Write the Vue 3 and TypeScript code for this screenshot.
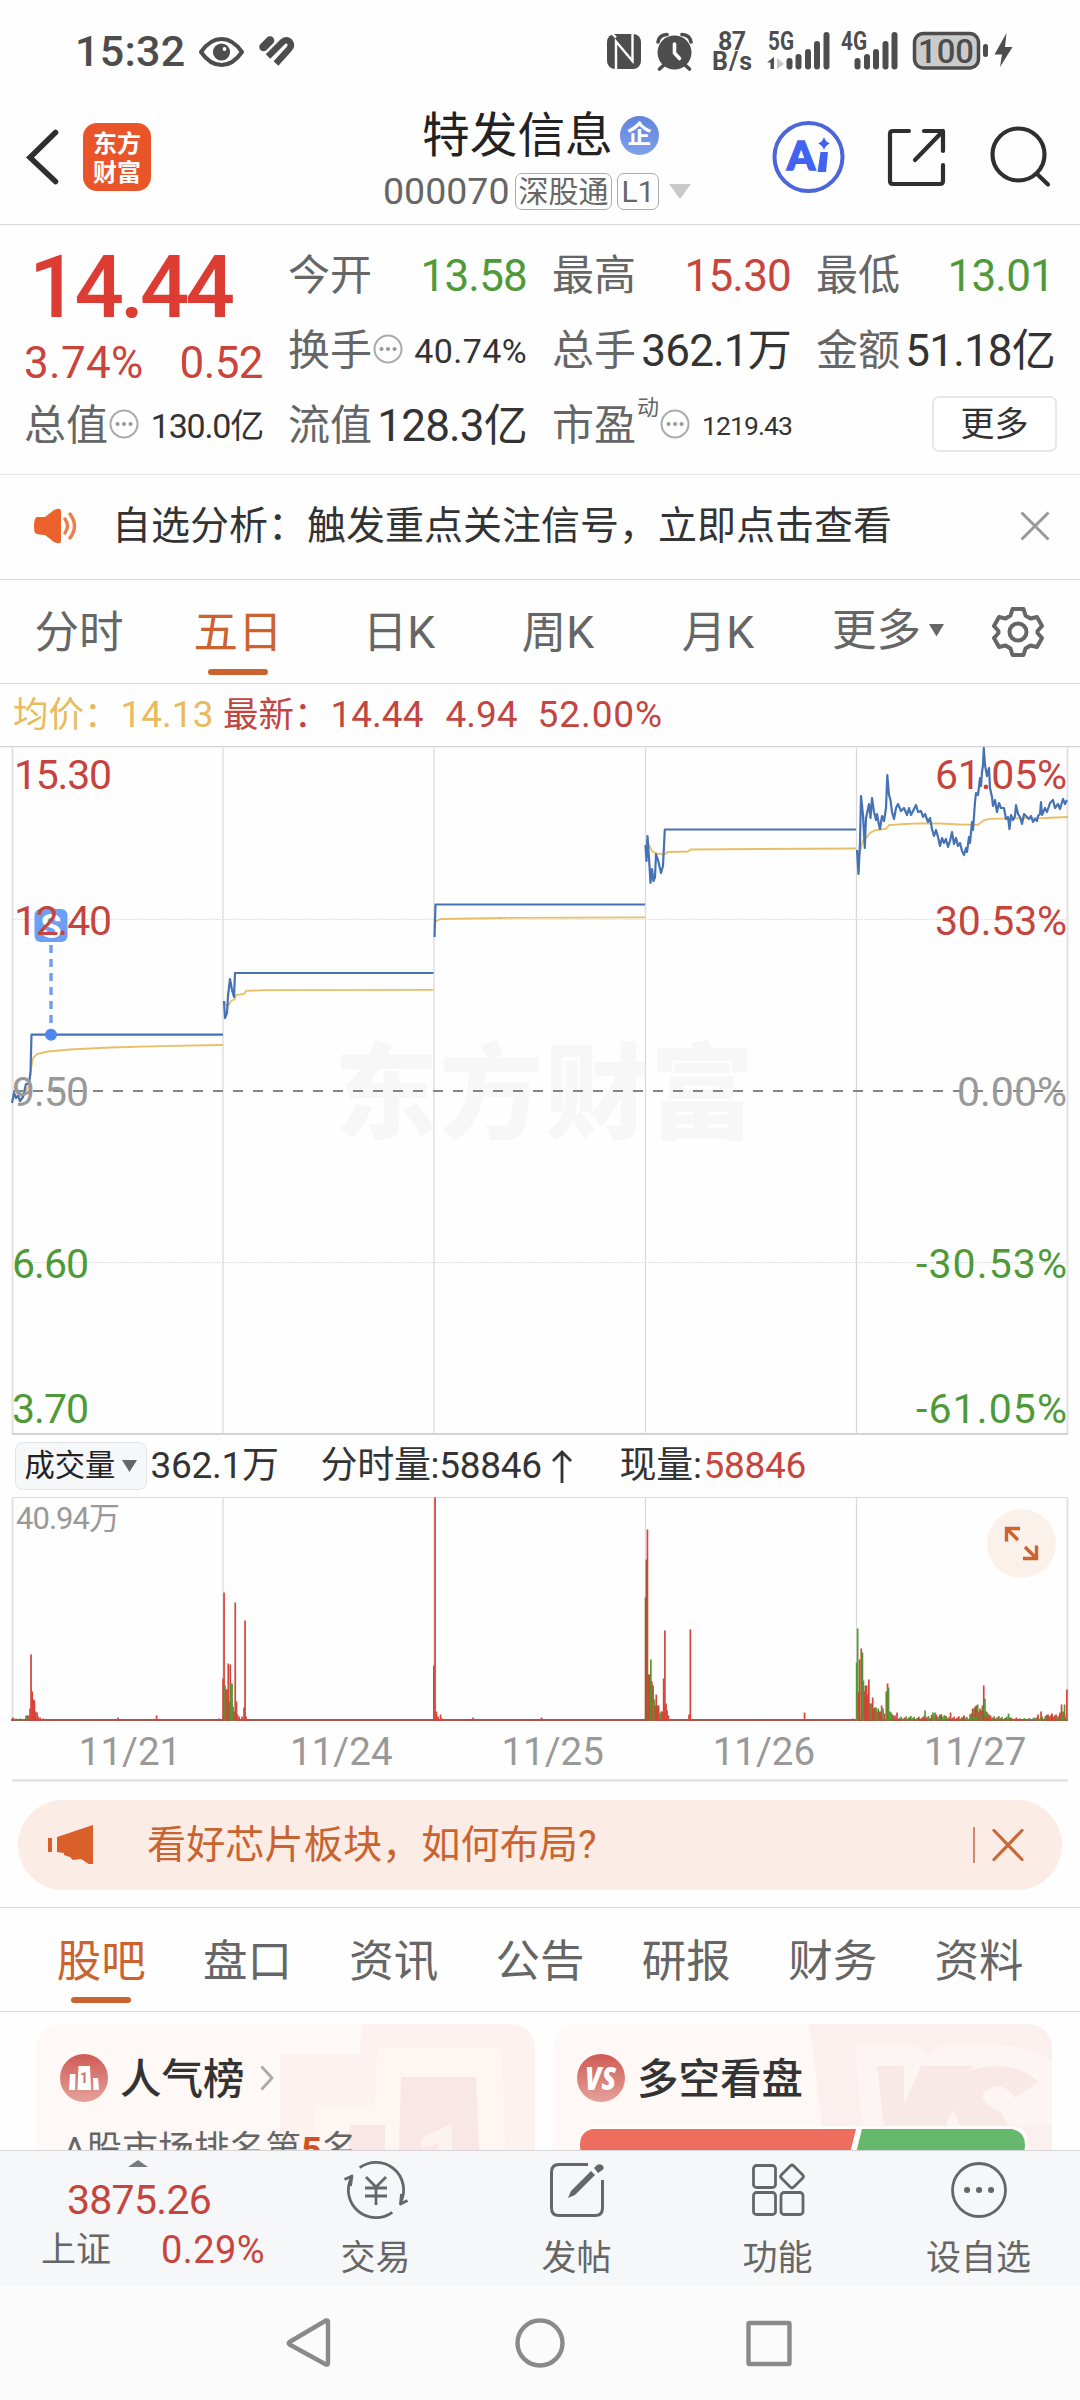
<script setup lang="ts">
type Point = [number, number]
type Bar = [number, number, 'r' | 'g' | 'm']

const periods = [
  { label: '分时', w: 158 },
  { label: '五日', w: 160, on: true },
  { label: '日K', w: 162 },
  { label: '周K', w: 156 },
  { label: '月K', w: 164 },
]
const sections = ['股吧', '盘口', '资讯', '公告', '研报', '财务', '资料']

const dayX = [223, 434, 645.5, 856.5]
const toLine = (pts: Point[]) => pts.map((p) => p.join(',')).join(' ')

const priceLines: string[] = ([
  [[12, 1103], [14, 1093], [16, 1098], [18, 1096], [20, 1101], [23, 1097], [26, 1084], [29, 1084], [30.5, 1072], [31.5, 1034.7], [223, 1034.7]],
  [[224, 1001], [225, 1018], [227, 1013], [228, 996], [230, 979], [232, 990], [234, 997], [235, 973], [433.5, 973]],
  [[434.5, 937], [435.5, 904.5], [645, 904.5]],
  [[645.5, 845], [646.5, 861], [647.5, 836], [649, 858], [650.5, 883], [652, 869], [653.5, 881], [655, 877], [656, 854], [658, 860], [661, 873], [663, 866], [664.8, 829.5], [856, 829.5]],
  [[857, 850], [858.5, 874], [860, 842], [861, 796], [863, 815], [864.8, 848], [866, 818], [869, 804], [870.5, 818], [872, 798], [874, 812], [876, 820], [877, 814], [879, 825], [880, 829], [882, 816], [884, 821], [886, 808], [887.3, 775], [889, 795], [890.5, 800], [892, 812], [894, 819], [896, 808], [898, 804], [901, 811], [904, 808], [907, 815], [909, 808], [911, 815], [914, 809], [916, 805], [918, 812], [921, 811], [923, 817], [925, 814], [928, 822], [930, 818], [932, 829], [934, 836], [936, 830], [938, 837], [940, 846], [942, 838], [944, 843], [946, 839], [948, 847], [950, 841], [952, 832], [954, 844], [956, 838], [958, 846], [960, 843], [962, 851], [964, 855], [966, 848], [967, 852], [969, 837], [970, 843], [972, 822], [973, 830], [975, 802], [976, 793], [978, 795], [980, 778], [981, 786], [982, 772], [983, 765], [983.8, 748], [985, 765], [987, 776], [989, 768], [990, 788], [992, 797], [993, 806], [995, 800], [997, 812], [999, 803], [1001, 808], [1004, 808], [1006, 819], [1008, 817], [1009.5, 829], [1011, 815], [1013, 820], [1015, 816], [1016, 805], [1018, 814], [1020, 817], [1022, 824], [1024, 814], [1027, 817], [1029, 819], [1031, 816], [1033, 822], [1035, 819], [1037, 821], [1038, 816], [1040, 814], [1041, 802], [1042, 815], [1045, 808], [1047, 812], [1050, 803], [1053, 800], [1055, 808], [1058, 804], [1060, 809], [1063, 799], [1065, 804], [1067, 800]],
] as Point[][]).map(toLine)

const averageLines: string[] = ([
  [[13, 1096], [22, 1096], [29, 1086], [31.5, 1066], [33, 1058], [37, 1054], [48, 1051.5], [70, 1049.5], [110, 1047.5], [160, 1046.2], [223, 1045]],
  [[224, 1003], [228, 1006], [231, 1001], [235, 999], [236, 995], [244, 994], [246, 990.8], [265, 990.2], [433.5, 989.8]],
  [[435.5, 922], [437, 920.5], [441, 919], [500, 918], [645, 917.3]],
  [[646, 840], [649, 845], [652, 851], [656, 853.5], [664, 854.5], [668, 852], [688, 851.5], [691, 849.5], [760, 849], [856, 848.5]],
  [[858, 862], [861, 848], [863, 840], [866, 838], [870, 833], [876, 830], [886, 829], [889, 825], [905, 824], [920, 823.3], [940, 823.5], [960, 824.5], [978, 824.8], [984, 820], [990, 818.8], [1010, 818.3], [1045, 818], [1068, 817]],
] as Point[][]).map(toLine)

// Minute volume: sample position, bar height, direction
const bars: Bar[] = [
  [13, 3, 'r'], [16, 2, 'g'], [20, 2, 'g'], [26, 5, 'g'], [27.5, 5, 'm'], [29, 5, 'r'], [30, 12, 'r'], [31, 66, 'r'], [32.2, 29, 'r'], [33.4, 21, 'r'],
  [34.4, 20, 'r'], [35.5, 9, 'r'], [37, 8, 'r'], [38, 4, 'r'], [40, 3, 'r'], [43, 2, 'r'], [55, 1.5, 'r'], [65, 1.5, 'r'], [105, 1.5, 'r'], [118, 3, 'r'], [156.5, 5, 'r'], [219, 2, 'r'],
  [223, 42, 'r'], [224, 128, 'r'], [225, 35, 'g'], [226, 31, 'm'], [227, 31, 'r'], [228.2, 57, 'r'], [229, 19, 'm'], [230.2, 56, 'r'], [231, 37, 'g'], [232, 37, 'g'], [233, 14, 'g'], [234, 9, 'm'],
  [235.2, 118, 'r'], [236.4, 19, 'r'], [237.4, 6, 'r'], [239, 4, 'r'], [242, 4, 'r'], [244, 13, 'r'], [245, 100, 'r'], [246, 4, 'r'],
  [433.8, 55, 'r'], [435, 223, 'r'], [436.4, 9, 'r'], [438, 4, 'r'], [440.5, 6, 'r'], [442, 2, 'r'], [473, 3, 'r'], [541.5, 3, 'r'],
  [645.5, 123, 'm'], [646.4, 161, 'm'], [647.4, 191, 'r'], [648.6, 46, 'r'], [649.6, 46, 'm'], [650.8, 61, 'g'], [651.8, 39, 'r'], [653, 35, 'm'], [654.2, 21, 'g'], [655.2, 15, 'r'], [656.2, 26, 'r'],
  [657.4, 15, 'm'], [658.6, 15, 'r'], [660, 7, 'm'], [661, 9, 'g'], [662.2, 9, 'r'], [663.6, 42, 'r'], [664.8, 90, 'r'], [666, 17, 'r'], [667, 10, 'r'], [668.4, 5, 'r'], [689, 6, 'r'], [690.3, 91, 'r'], [751.5, 1.5, 'r'], [804.5, 8, 'r'], [853, 2, 'r'],
  [856.6, 58, 'g'], [857.6, 92, 'g'], [858.6, 28, 'r'], [859.6, 61, 'm'], [861.2, 72, 'r'], [862.4, 68, 'g'], [863.4, 40, 'g'], [864.4, 29, 'r'], [865.4, 35, 'm'], [866.6, 35, 'r'], [867.6, 26, 'r'], [868.8, 41, 'r'], [870, 17, 'm'],
  [871.2, 17, 'g'], [872.6, 23, 'r'], [873.6, 12, 'r'], [874.8, 13, 'm'], [876, 13, 'g'], [877, 9, 'r'], [878.2, 12, 'g'], [879.4, 9, 'm'], [880.6, 9, 'r'], [881.6, 15, 'r'], [883, 12, 'g'], [884.4, 7, 'r'], [886.2, 29, 'g'], [887.5, 37, 'r'], [888.5, 33, 'g'], [889.8, 9, 'g'],
  [891, 8, 'g'], [892.2, 6, 'm'], [893.6, 5, 'g'], [895, 5, 'r'], [897, 8, 'r'], [925, 10, 'g'], [933, 8, 'g'], [935, 8, 'g'], [940, 6, 'r'], [950.5, 8, 'r'], [964, 5, 'r'], [970, 6, 'g'], [971.3, 7, 'm'], [972.6, 12, 'm'], [974, 12, 'r'], [975.2, 14, 'm'], [976.4, 15, 'm'], [977.6, 16, 'g'], [978.8, 9, 'r'], [980, 12, 'm'], [981.2, 10, 'r'], [982.4, 15, 'm'], [983.7, 35, 'r'], [984.9, 22, 'g'], [986, 9, 'm'], [987.4, 8, 'g'], [989, 6, 'm'], [990.6, 5, 'r'],
  [1008.5, 7, 'g'], [1038, 6, 'r'], [1041, 9, 'r'], [1048, 6, 'r'], [1052, 7, 'r'], [1056, 6, 'r'], [1060, 8, 'r'], [1061.5, 16, 'r'], [1063, 9, 'm'], [1064.5, 16, 'g'], [1066.8, 31, 'r'],
]
const tail: Bar[] = Array.from({ length: 106 }, (_, i): Bar => {
  const x = 898 + i * 1.6
  const h = 1.5 + ((i * 37) % 11) * 0.3 + (x > 930 && x < 945 ? 2 : 0) + (x > 1045 ? 1.5 : 0) - (x > 1010 && x < 1035 ? 1.5 : 0)
  return [x, Math.max(h, 1), (['r', 'g', 'm', 'r', 'g'] as const)[(i * 3 + (i >> 2)) % 5]]
})
const hues = { r: '#d8433a', g: '#4f9a35', m: '#96602b' }
const volume = [...bars, ...tail]
const dates = ['11/21', '11/24', '11/25', '11/26', '11/27']
</script>

<template>
  <div class="phone">
    <div class="status">
      <span class="clock">15:32</span>
      <svg class="st-left" viewBox="195 30 105 42" width="105" height="42" fill="none" stroke="#4d4d4d">
        <path d="M201 52Q210 39 221.500 39Q233 39 242 52Q233 65 221.500 65Q210 65 201 52Z" stroke-width="4" stroke-linejoin="round" />
        <circle cx="221.500" cy="52" r="8.600" fill="#4d4d4d" stroke="none" />
        <circle cx="224.500" cy="49" r="1.900" fill="#fff" stroke="none" />
        <path d="M263.500 47L270 40.500" stroke-width="8.500" stroke-linecap="round" />
        <path d="M268 56.500L283 41.500Q286.500 39 289.500 41.500Q292.500 45 289.500 48.500L276 63.500" stroke-width="6.400" stroke-linejoin="round" />
        <path d="M272 60.500L286 46.500" stroke="#fff" stroke-width="1.600" />
      </svg>
      <svg class="st-right" viewBox="600 26 420 50" width="420" height="50" fill="#4d4d4d">
        <rect x="607" y="34" width="34" height="35" rx="8" />
        <path d="M616 66V41.500L632.500 61V37M611.500 33L616 37.500M616 41V69.500M632.500 33V62" fill="none" stroke="#fff" stroke-width="2.400" />
        <circle cx="674.500" cy="52.500" r="17" />
        <path d="M658 42Q659 35 667 34.500M691 42Q690 35 682 34.500M664 65L659.500 69M685 65L689.500 69" fill="none" stroke="#4d4d4d" stroke-width="3.600" stroke-linecap="round" />
        <path d="M674.500 44V53L679.500 58.500" fill="none" stroke="#fff" stroke-width="3.600" stroke-linejoin="round" stroke-linecap="round" />
        <g font-family="Roboto" font-weight="700" font-size="25">
          <text x="718" y="50" textLength="28">87</text>
          <text x="712" y="70" textLength="40">B/s</text>
          <text x="768" y="50" textLength="26" lengthAdjust="spacingAndGlyphs">5G</text>
          <text x="841" y="50" textLength="26" lengthAdjust="spacingAndGlyphs">4G</text>
        </g>
        <path d="M767 62.500L774 57V69H770.500V62.500Z" />
        <path d="M777 58L784 64L777 69Z" fill="#c8c8c8" />
        <g stroke="#4d4d4d" stroke-width="6" stroke-linecap="round">
          <path d="M789.500 61V66.500M798.500 57V66.500M808 52V66.500M817 44V66.500M826.500 35V66.500" />
          <path d="M857.500 61V66.500M867 57V66.500M876 52V66.500M885.500 44V66.500M894.500 35V66.500" />
        </g>
        <rect x="914.500" y="33.500" width="64" height="34.500" rx="9" fill="#cbcbcb" stroke="#4d4d4d" stroke-width="3.500" />
        <text x="918" y="62.500" font-family="Roboto" font-weight="500" font-size="34" textLength="56" lengthAdjust="spacingAndGlyphs">100</text>
        <rect x="983" y="44" width="5" height="13" rx="2.500" />
        <path d="M1006.500 33L994.500 54.500H1002L1000 67L1012.500 47H1005Z" />
      </svg>
    </div>

    <header class="head">
      <div class="head-l">
        <svg width="34" height="58" viewBox="0 0 34 58"><path d="M29.500 4.500L4 29.500L29.500 53.500" fill="none" stroke="#2f2f2f" stroke-width="5.500" stroke-linecap="round" stroke-linejoin="miter" /></svg>
        <div class="logo"><span>东方</span><span>财富</span></div>
      </div>
      <div class="head-c">
        <div class="name"><span>特发信息</span><i>企</i></div>
        <div class="code">
          <span>000070</span><b class="gt">深股通</b><b class="l1">L1</b>
          <svg width="22" height="15" viewBox="0 0 22 15"><path d="M0 0H22L11 15Z" fill="#cacaca" /></svg>
        </div>
      </div>
      <svg class="head-r" width="300" height="80" viewBox="760 117 300 80" fill="none" stroke="#2f2f2f" stroke-width="4.200">
        <circle cx="808.500" cy="157" r="34" stroke="#4b66da" stroke-width="4" />
        <text x="787" y="170" fill="#4263f0" stroke="#4263f0" stroke-width="1.600" font-family="Lato" font-weight="900" font-size="40" textLength="27">A</text>
        <path d="M820.500 152H828L826 172H817.500Z" fill="#4263f0" stroke="none" />
        <path d="M824 137Q825.500 142 830 143.500Q825.500 145 824 150Q822.500 145 818 143.500Q822.500 142 824 137Z" fill="#4263f0" stroke="none" />
        <path d="M909 131H893Q890 131 890 134V181Q890 184 893 184H940Q943 184 943 181V165M924 131H943V151M943 131L915 160" stroke-linecap="round" stroke-linejoin="round" />
        <circle cx="1018.500" cy="154.500" r="26" />
        <path d="M1037 174L1048 184.500" stroke-linecap="round" />
      </svg>
    </header>

    <section class="quote">
      <div class="col c1">
        <div class="price">14.44</div>
        <div class="row chg"><span>3.74%</span><span class="abs">0.52</span></div>
        <div class="row r3"><label>总值</label><svg class="tip" viewBox="0 0 30 30"><circle cx="15" cy="15" r="13.500" /><path d="M8.500 15h.1M15 15h.1M21.500 15h.1" /></svg><span class="v sm cap">130.0亿</span></div>
      </div>
      <div class="col c2">
        <div class="row"><label>今开</label><span class="v down">13.58</span></div>
        <div class="row"><label>换手</label><svg class="tip" viewBox="0 0 30 30"><circle cx="15" cy="15" r="13.500" /><path d="M8.500 15h.1M15 15h.1M21.500 15h.1" /></svg><span class="v sm">40.74%</span></div>
        <div class="row"><label>流值</label><span class="v">128.3亿</span></div>
      </div>
      <div class="col c3">
        <div class="row"><label>最高</label><span class="v up">15.30</span></div>
        <div class="row"><label>总手</label><span class="v">362.1万</span></div>
        <div class="row"><label>市盈</label><sup>动</sup><svg class="tip" viewBox="0 0 30 30"><circle cx="15" cy="15" r="13.500" /><path d="M8.500 15h.1M15 15h.1M21.500 15h.1" /></svg><span class="v xs">1219.43</span></div>
      </div>
      <div class="col c4">
        <div class="row"><label>最低</label><span class="v down low">13.01</span></div>
        <div class="row"><label>金额</label><span class="v">51.18亿</span></div>
        <div class="row"><button>更多</button></div>
      </div>
    </section>

    <section class="notice">
      <svg width="46" height="38" viewBox="0 0 46 38"><path d="M4 10Q1 11 1 19T4 27Q9 28 12 28L21 35Q28 38 28 34V4Q28 0 21 3L12 10Z" fill="#ec622d" /><path d="M32 12Q37 19 32 26M37 7Q46 19 37 31" fill="none" stroke="#ec7e4e" stroke-width="3.400" stroke-linecap="round" /></svg>
      <p>自选分析：触发重点关注信号，立即点击查看</p>
      <svg class="x" width="30" height="30" viewBox="0 0 30 30"><path d="M1.500 1.500L28.500 28.500M28.500 1.500L1.500 28.500" stroke="#999" stroke-width="3" /></svg>
    </section>

    <nav class="periods">
      <span v-for="p in periods" :key="p.label" :class="{ on: p.on }" :style="{ width: p.w + 'px' }">{{ p.label }}</span>
      <span class="more">更多<svg width="15" height="13" viewBox="0 0 15 13"><path d="M0 0H15L7.500 12.500Z" fill="#666" /></svg></span>
      <svg class="gear" width="54" height="54" viewBox="-27 -27 54 54" fill="none" stroke="#666" stroke-width="4">
        <path d="M-5.500 -23H5.500L7.500 -16.500L12.500 -13.500L19 -15L24 -6L19.500 -1V1L24 6L19 15L12.500 13.500L7.500 16.500L5.500 23H-5.500L-7.500 16.500L-12.500 13.500L-19 15L-24 6L-19.500 1V-1L-24 -6L-19 -15L-12.500 -13.500L-7.500 -16.500Z" stroke-linejoin="round" />
        <circle r="8.500" />
      </svg>
    </nav>

    <div class="legend">
      <span class="avg">均价：<em>14.13</em></span>
      <span class="cur">最新：<em>14.44</em><em class="d">4.94</em><em class="e">52.00%</em></span>
    </div>

    <svg class="chart" width="1080" height="690" viewBox="0 746 1080 690">
      <text x="334" y="1131" class="mark" textLength="420">东方财富</text>
      <path d="M0 746.500H1080" stroke="#d3d3d3" stroke-width="1.500" />
      <path d="M12.500 747V1434M1067.500 747V1434" stroke="#e2e2e2" stroke-width="2" />
      <path d="M12 1434H1068" stroke="#d3d3d3" stroke-width="2" />
      <path v-for="x in dayX" :key="x" :d="`M${x} 748V1434`" stroke="#dadada" stroke-width="1.300" />
      <path d="M12 919.500H1068M12 1262.500H1068" stroke="#d6d6d6" stroke-width="1" stroke-dasharray="1.500 1.500" />
      <polyline v-for="(l, i) in averageLines" :key="'a' + i" :points="l" fill="none" stroke="#e8bf68" stroke-width="1.800" />
      <polyline v-for="(l, i) in priceLines" :key="'p' + i" :points="l" fill="none" stroke="#4472b5" stroke-width="2.200" stroke-linejoin="round" />
      <path d="M13 1091H1066" stroke="#858585" stroke-width="2" stroke-dasharray="10 10" />
      <g class="sell">
        <rect x="34.500" y="909" width="33" height="33" rx="6" fill="#6c9ff5" />
        <text x="51" y="938" text-anchor="middle" class="s">S</text>
        <path d="M51 945V1030" stroke="#74a0ea" stroke-width="3.500" stroke-dasharray="8 6" />
        <circle cx="51" cy="1034.700" r="6" fill="#4d86ee" />
      </g>
      <g class="axis">
        <text x="14" y="789" textLength="98" fill="#c5443d">15.30</text>
        <text x="14" y="934.500" textLength="98" fill="#c5443d">12.40</text>
        <text x="12" y="1106" textLength="77" fill="#999">9.50</text>
        <text x="12" y="1278" textLength="77" fill="#4e9a38">6.60</text>
        <text x="12" y="1422.500" textLength="77" fill="#4e9a38">3.70</text>
        <text x="935" y="789" textLength="132" fill="#c5443d">61.05%</text>
        <text x="935" y="934.500" textLength="132" fill="#c5443d">30.53%</text>
        <text x="957" y="1106" textLength="110" fill="#999">0.00%</text>
        <text x="916" y="1278" textLength="151" fill="#4e9a38">-30.53%</text>
        <text x="916" y="1422.500" textLength="151" fill="#4e9a38">-61.05%</text>
      </g>
    </svg>

    <div class="volhead">
      <span class="chip">成交量<svg width="15" height="12" viewBox="0 0 15 12"><path d="M0 0H15L7.500 12Z" fill="#666" /></svg></span>
      <span class="t1">362.1万</span>
      <span class="t2">分时量:58846</span>
      <svg width="22" height="34" viewBox="0 0 22 34"><path d="M11 33V2M2 11L11 2L20 11" fill="none" stroke="#333" stroke-width="2.800" /></svg>
      <span class="t3">现量:<em>58846</em></span>
    </div>

    <svg class="vol" width="1080" height="286" viewBox="0 1496 1080 286">
      <path d="M12 1497.500H1068" stroke="#dcdcdc" stroke-width="1.200" />
      <path d="M12.500 1497V1720M1067.500 1497V1720" stroke="#e2e2e2" stroke-width="2" />
      <path v-for="x in dayX" :key="x" :d="`M${x} 1497V1720`" stroke="#dadada" stroke-width="1.300" />
      <path d="M11 1720H1068" stroke="#a5574f" stroke-width="2" />
      <rect v-for="(b, i) in volume" :key="i" :x="b[0] - 0.8" :y="1720.500 - b[1]" width="1.700" :height="b[1]" :fill="hues[b[2]]" />
      <text x="16" y="1529" class="peak" textLength="104">40.94万</text>
      <circle cx="1021.500" cy="1543.500" r="34.500" fill="#fbf1eb" />
      <path d="M1006.500 1541.500V1528.500H1020M1007 1529L1018 1540M1023 1558.500H1036.500V1545.500M1036 1558L1025 1547" fill="none" stroke="#cb6431" stroke-width="3.400" />
      <text v-for="(d, i) in dates" :key="d" :x="130 + i * 211.300" y="1765" text-anchor="middle" class="date">{{ d }}</text>
      <path d="M12 1780.500H1068" stroke="#e3e3e3" stroke-width="2.500" />
    </svg>

    <div class="banner">
      <svg width="48" height="42" viewBox="0 0 48 42"><path d="M0 14H4V28H0ZM9 13L33 5L45 1V40H41L33 35L25 36L22 33L16 31V29L9 28Z" fill="#d9602a" /></svg>
      <p>看好芯片板块，如何布局?</p>
      <i></i>
      <svg width="32" height="32" viewBox="0 0 32 32"><path d="M2 1.500L30 30.500M30 1.500L2 30.500" stroke="#c96838" stroke-width="3.200" stroke-linecap="round" /></svg>
    </div>

    <nav class="sections">
      <span v-for="(s, i) in sections" :key="s" :class="{ on: i === 0 }">{{ s }}</span>
    </nav>

    <div class="cards">
      <article>
        <svg class="bg" width="499" height="126" viewBox="36 2024 499 126">
          <path d="M362 2024H535V2150H315V2106H315V2150H280V2055H360Z" fill="#fcefec" opacity=".7" />
          <path d="M378 2048H501L506 2150H315V2106H374Z" fill="#fdf6f3" />
          <path d="M401 2077H476L479 2150H399ZM350 2125H385V2150H349Z" fill="#f8e7e5" />
          <path d="M421 2138L452 2124V2150H438V2144L421 2148Z" fill="#fcf2ef" />
        </svg>
        <div class="title">
          <svg width="48" height="48" viewBox="0 0 48 48">
            <defs><linearGradient id="rd" x1="0" y1="0" x2="0" y2="1"><stop offset="0" stop-color="#cd5b54" /><stop offset="1" stop-color="#e6a09a" /></linearGradient></defs>
            <circle cx="24" cy="24" r="24" fill="url(#rd)" />
            <path d="M10 20H15.500L15 36H9ZM18.500 12H30L31 36H17.500ZM33 24H38L39 36H33.500Z" fill="#fff" />
            <text x="24" y="29" text-anchor="middle" font-family="Roboto" font-weight="700" font-size="14" fill="#d4736b">1</text>
          </svg>
          <h3>人气榜</h3>
          <svg class="go" width="14" height="26" viewBox="0 0 14 26"><path d="M1.500 1.500L12 13L1.500 24.500" fill="none" stroke="#aaa" stroke-width="2.800" /></svg>
        </div>
        <p class="rank">A股市场排名第<b>5</b>名</p>
      </article>
      <article>
        <svg class="bg" width="499" height="126" viewBox="553 2024 499 126">
          <path d="M809 2024H1052V2150H826L822 2125Z" fill="#fcf0ee" />
          <path d="M855 2045H917L929 2056L941 2045H1000Q1040 2048 1052 2062V2125H862Z" fill="#fdf5f3" />
          <path d="M877 2066H904V2105L921 2066H975L965 2072Q1010 2056 1038 2082L1015 2098Q1002 2078 984 2092Q978 2102 1000 2112L1010 2126H950L953 2110L945 2126H884Z" fill="#f8e8e6" />
          <path d="M953 2110L960 2126H947Z" fill="#fdf5f3" />
        </svg>
        <div class="title">
          <svg width="48" height="48" viewBox="0 0 48 48"><circle cx="24" cy="24" r="24" fill="url(#rd)" /><text x="23.500" y="36" text-anchor="middle" font-family="Open Sans" font-weight="800" font-style="italic" font-size="31" textLength="31" lengthAdjust="spacingAndGlyphs" fill="#fff">VS</text></svg>
          <h3>多空看盘</h3>
        </div>
        <svg class="duel" width="451" height="40" viewBox="577 2126 451 40">
          <rect x="577" y="2126" width="451" height="38" rx="16" fill="#fff" opacity=".8" />
          <path d="M592 2129H856L848 2161H592Q580 2158 580 2145T592 2129Z" fill="#ed6e5f" />
          <path d="M862 2129H1012Q1025 2132 1025 2145T1012 2161H854Z" fill="#66b96c" />
        </svg>
      </article>
    </div>

    <footer class="dock">
      <div class="index">
        <svg width="20" height="7" viewBox="0 0 20 7"><path d="M0 7L10 0L20 7Z" fill="#77797c" /></svg>
        <strong>3875.26</strong>
        <div><span>上证</span><em>0.29%</em></div>
      </div>
      <div class="act">
        <svg width="66" height="60" viewBox="-33 -30 66 60" fill="none" stroke="#666" stroke-width="2.800">
          <path d="M-16.300 -22.300A27.600 27.600 0 0 1 25 11.700M31.500 10.500L24.500 14L25.500 4" stroke-linejoin="round" />
          <path d="M16.300 22.300A27.600 27.600 0 0 1 -25 -11.700M-31.500 -10.500L-24 -14L-25.500 -4" stroke-linejoin="round" />
          <path d="M-10 -13L0 -3L10 -13M0 -3V15M-11 -2H11M-11 6H11" />
        </svg><span>交易</span>
      </div>
      <div class="act">
        <svg width="66" height="60" viewBox="-33 -30 66 60" fill="none" stroke="#666" stroke-width="3">
          <path d="M11 -25.500H-18Q-25.500 -25.500 -25.500 -18V18Q-25.500 25.500 -18 25.500H18Q25.500 25.500 25.500 18V-10" />
          <path d="M-9 8L-6 1L14 -19L18 -15L-2 5ZM17 -22L20 -25Q24 -27 26 -24T24 -19L21 -17Z" fill="#666" stroke="none" />
        </svg><span>发帖</span>
      </div>
      <div class="act">
        <svg width="66" height="60" viewBox="-33 -30 66 60" fill="none" stroke="#666" stroke-width="2.800">
          <rect x="-24.500" y="-24.500" width="22" height="22" rx="3" /><rect x="-24.500" y="2.500" width="22" height="22" rx="3" /><rect x="3" y="2.500" width="22" height="22" rx="3" />
          <rect x="-8.700" y="-8.700" width="17.400" height="17.400" rx="2.500" transform="translate(14 -13.500) rotate(45)" />
        </svg><span>功能</span>
      </div>
      <div class="act">
        <svg width="66" height="60" viewBox="-33 -30 66 60" fill="none" stroke="#666" stroke-width="2.800">
          <circle r="26.500" /><path d="M-12 0h.1M0 0h.1M12 0h.1" stroke-width="6" stroke-linecap="round" />
        </svg><span>设自选</span>
      </div>
    </footer>

    <div class="keys">
      <svg width="1080" height="114" viewBox="0 2286 1080 114" fill="none" stroke="#8a8a8a" stroke-width="4.400" stroke-linejoin="round">
        <path d="M289.500 2342L326 2320.500Q328 2320 328 2322V2363Q328 2365 326 2364.500L289.500 2344.500Q288 2343 289.500 2342Z" />
        <circle cx="540" cy="2343" r="22.500" />
        <rect x="748.500" y="2323" width="41" height="41" rx="1" />
      </svg>
    </div>
  </div>
</template>

<style>
body { margin: 0; background: #fff; }
</style>

<style scoped>
* { box-sizing: border-box; }
.phone { width: 1080px; height: 2400px; overflow: hidden; background: #fefefe; color: #333; font-family: Roboto, "Noto Sans CJK SC", sans-serif; line-height: 1.3; display: flex; flex-direction: column; }
.phone > * { flex: none; }
svg { display: block; flex: none; }
em, i { font-style: normal; }
p, h3 { margin: 0; font-weight: 400; }

.status { height: 100px; display: flex; align-items: flex-start; color: #4d4d4d; }
.clock { font-size: 43px; font-weight: 500; line-height: 50px; margin: 26px 0 0 75px; width: 120px; white-space: nowrap; letter-spacing: .3px; }
.st-left { margin-top: 30px; }
.st-right { margin: 26px 0 0 300px; }

.head { height: 125px; border-bottom: 1.500px solid #d8d8d8; display: flex; }
.head-l { width: 383px; display: flex; align-items: flex-start; padding-left: 26px; }
.head-l svg { margin-top: 28px; }
.logo { margin: 23px 0 0 23px; width: 68px; height: 68px; border-radius: 14px; background: #e95529; color: #fff; font: 700 24px/29px "Noto Sans CJK SC", sans-serif; display: flex; flex-direction: column; align-items: center; padding-top: 4px; }
.head-c { width: 377px; }
.name { display: flex; margin-left: 39px; font-size: 47.700px; line-height: 60px; height: 68px; padding-top: 6px; color: #222; align-items: flex-start; }
.name i { width: 39px; height: 39px; border-radius: 50%; background: linear-gradient(#5f84dc, #7fa0ea); color: #fff; font-size: 25px; font-weight: 700; line-height: 38px; text-align: center; margin: 10px 0 0 7px; }
.code { display: flex; align-items: center; height: 46px; color: #666; font-size: 37.500px; }
.code > span { width: 132px; }
.code b { border: 1.500px solid #aaa; border-radius: 7px; height: 37px; font-weight: 400; font-size: 30px; line-height: 35px; text-align: center; }
.gt { width: 97px; }
.l1 { width: 42px; margin: 0 10px 0 5px; }
.head-r { margin-top: 17px; }

.quote { height: 250px; border-bottom: 1.500px solid #e8e8e8; display: flex; padding-top: 14px; }
.col { display: flex; flex-direction: column; }
.c1 { width: 238px; margin-left: 24px; }
.c2 { width: 238px; margin-left: 26px; }
.c3 { width: 238px; margin-left: 26px; }
.c4 { width: 238px; margin-left: 26px; }
.row { height: 75px; display: flex; align-items: center; white-space: nowrap; }
.row label { color: #666; font-size: 42px; }
.v { margin-left: auto; font-size: 44px; letter-spacing: -.8px; margin-right: -1px; }
.sm { font-size: 34px; letter-spacing: .4px; }
.sm.cap { letter-spacing: -1.200px; }
.xs { font-size: 26.500px; letter-spacing: -.9px; margin-right: -2px; }
.up, .chg { color: #c8443d; }
.down { color: #4f9a38; }
.low { padding-right: 1px; }
.price { height: 93px; color: #dd3c33; font-size: 87px; line-height: 97px; font-weight: 500; letter-spacing: -4px; padding-left: 5px; }
.chg { height: 57px; font-size: 44px; letter-spacing: .3px; justify-content: space-between; padding-top: 6px; }
.abs { letter-spacing: -.6px; margin-right: -1px; }
.tip { width: 30px; height: 30px; fill: none; stroke: #aaa; stroke-width: 2; stroke-linecap: round; margin-top: -5px; margin-left: 1px; }
.tip path { stroke-width: 4; stroke: #999; }
.row sup { font-size: 22px; line-height: 24px; color: #666; margin: -38px 0 0 1px; }
button { font: 34px/50px Roboto, "Noto Sans CJK SC", sans-serif; color: #333; width: 125px; height: 56px; border: 2px solid #e7e7e7; border-radius: 7px; background: #fff; margin: -6px -3px 0 auto; padding: 0; }

.notice { height: 105px; border-bottom: 1.500px solid #d8d8d8; display: flex; align-items: center; padding: 0 0 2px 33px; }
.notice p { margin-left: 33px; font-size: 39px; width: 908px; white-space: nowrap; }

.periods { height: 104px; border-bottom: 1.500px solid #d8d8d8; display: flex; align-items: center; color: #666; font-size: 44.500px; }
.periods > span { text-align: center; height: 100%; line-height: 107px; position: relative; white-space: nowrap; }
.periods > span.more { width: 180px; display: flex; align-items: center; padding-left: 32px; }
.more svg { margin: 0 0 3px 8px; }
.gear { margin-left: 11px; }
.on { color: #cc622e; }
.periods .on::after, .sections .on::after { content: ""; position: absolute; left: 50%; margin-left: -30px; bottom: 8px; width: 60px; height: 6px; border-radius: 3px; background: #cc622e; }

.legend { height: 62px; display: flex; align-items: center; font-size: 35.500px; white-space: nowrap; }
.legend em { font-size: 37px; letter-spacing: 0; margin-left: 1px; }
.avg { color: #e8bb5c; width: 210px; margin-left: 13px; }
.cur { color: #c3453e; }
.legend .d { margin-left: 22px; }
.legend .e { margin-left: 20px; letter-spacing: .9px; }

.mark { font: 900 104px "Noto Sans CJK SC", sans-serif; fill: #f7f7f7; }
.axis { font-family: Roboto, sans-serif; font-size: 41px; }
.s { font: 700 34px Roboto, sans-serif; fill: #fff; }
.peak { font-size: 31px; fill: #999; }
.date { font-size: 38.500px; fill: #999; }

.volhead { height: 60px; display: flex; align-items: center; font-size: 37px; letter-spacing: -.3px; white-space: nowrap; padding-top: 1px; }
.chip { width: 132px; height: 48px; margin: -1px 0 0 14.500px; border: 1.500px solid #e2e4e6; border-radius: 8px; background: #f6f7f9; font-size: 30.300px; letter-spacing: 0; display: flex; align-items: center; color: #222; padding-left: 9px; }
.chip svg { margin-left: 7px; }
.t1 { width: 170px; margin-left: 4px; }
.t2 { width: 230px; }
.t3 { margin-left: 47px; }
.t3 em { color: #c8443d; margin-left: 2px; }

.banner { width: 1044px; height: 90px; margin: 18px 0 0 18px; border-radius: 45px; background: #fbede5; display: flex; align-items: center; color: #c96431; padding-left: 30px; }
.banner p { font-size: 39.200px; margin-left: 51px; width: 826px; }
.banner i { width: 1.500px; height: 36px; background: #d08a68; margin-right: 17px; }

.sections { margin-top: 17px; height: 105px; border-top: 1.500px solid #d8d8d8; border-bottom: 1.500px solid #d8d8d8; display: flex; padding-left: 28px; color: #666; font-size: 44.500px; }
.sections span { width: 146.300px; text-align: center; line-height: 108px; position: relative; }

.cards { height: 138px; overflow: hidden; padding: 12px 28px 0 36px; display: flex; justify-content: space-between; }
article { position: relative; width: 499px; height: 180px; border-radius: 24px; background: #fef8f6; overflow: hidden; }
.bg { position: absolute; left: 0; top: 0; }
.title { position: relative; display: flex; align-items: center; height: 60px; margin: 24px 0 0 24px; }
h3 { font-size: 41.500px; line-height: 62px; font-weight: 500; color: #333; margin: 3px 0 0 12px; }
.go { margin-left: 15px; }
.rank { position: relative; font-size: 35.800px; line-height: 50px; margin: 17px 0 0 27px; color: #666; white-space: nowrap; }
.rank b { color: #cc5226; }
.duel { position: relative; margin: 18px 0 0 24px; }

.dock { height: 136px; background: #f6f7f9; border-top: 1.500px solid #d5d5d8; display: flex; color: #666; }
.index { width: 275px; display: flex; flex-direction: column; align-items: center; padding-top: 9px; }
.index strong { font-weight: 400; font-size: 41px; line-height: 48px; color: #c3453e; margin: 9px 0 0 3px; letter-spacing: -.7px; }
.index > div { display: flex; justify-content: space-between; width: 224px; font-size: 35px; line-height: 53px; margin-left: 31px; }
.index em { color: #c8443d; font-size: 38px; letter-spacing: .4px; }
.act { width: 201px; display: flex; flex-direction: column; align-items: center; padding-top: 9px; font-size: 35px; line-height: 50px; }
.act span { margin-top: 13.500px; }
.keys { height: 114px; background: #fbfbfb; }
</style>
